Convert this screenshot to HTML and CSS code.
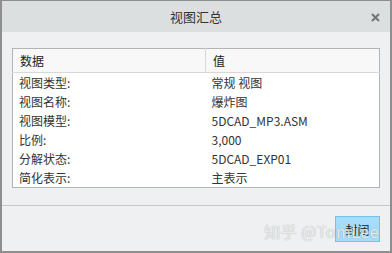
FILE: index.html
```html
<!DOCTYPE html>
<html lang="zh-CN">

<head>
    <meta charset="UTF-8">
    <title>视图汇总</title>
    <link rel="stylesheet" href="styles.css">
</head>

<body>
    <div class="dialogo">
        <!-- Título -->
        <div class="titulo">
            <span>视图汇总</span>
            <svg class="fechar" width="9" height="9" viewBox="0 0 9 9">
                <path d="M1 1 L8 8 M8 1 L1 8" stroke="#777" stroke-width="2.2" />
            </svg>
        </div>

        <!-- Tabela -->
        <div class="conteudo">
            <table class="tabela">
                <thead>
                    <tr>
                        <th class="col-dados">数据</th>
                        <th>值</th>
                    </tr>
                </thead>
                <tbody>
                    <tr><td>视图类型:</td><td>常规 视图</td></tr>
                    <tr><td>视图名称:</td><td>爆炸图</td></tr>
                    <tr><td>视图模型:</td><td>5DCAD_MP3.ASM</td></tr>
                    <tr><td>比例:</td><td>3,000</td></tr>
                    <tr><td>分解状态:</td><td>5DCAD_EXP01</td></tr>
                    <tr><td>简化表示:</td><td>主表示</td></tr>
                </tbody>
            </table>
        </div>

        <!-- Rodapé -->
        <div class="rodape">
            <button class="botao">封闭</button>
            <span class="marca">知乎 @TomLee</span>
        </div>
    </div>
</body>

</html>
```

FILE: styles.css
```css
/* Estilo geral */
body {
    margin: 0;
    padding: 0;
    font-family: "Noto Sans CJK SC", "Liberation Sans", sans-serif;
    font-size: 12px;
    color: #333;
}

.dialogo {
    width: 392px;
    height: 253px;
    box-sizing: border-box;
    border: 1px solid #8e8e8e;
    border-left-width: 2px;
    border-right-width: 2px;
    border-bottom-width: 2px;
    background-color: #eef0f2;
    display: flex;
    flex-direction: column;
}

/* Título */
.titulo {
    height: 31px;
    background-color: #dcdfe0;
    display: flex;
    align-items: center;
    justify-content: center;
    position: relative;
    font-size: 13px;
    color: #333;
}

.fechar {
    position: absolute;
    right: 10px;
    top: 12px;
}

/* Tabela */
.conteudo {
    padding: 16px 10px 0 10px;
    border-bottom: 1px solid #c8c8c8;
    height: 157px;
}

.tabela {
    width: 368px;
    border-collapse: collapse;
    border: 1px solid #b4b4b4;
    background-color: #fff;
}

.tabela th {
    height: 23px;
    padding: 0 0 0 7px;
    text-align: left;
    font-weight: normal;
    background-color: #f8f8f8;
    border-bottom: 1px solid #d8d8d8;
    color: #222;
}

.tabela th.col-dados {
    border-right: 1px solid #d8d8d8;
    width: 185px;
}

.tabela td {
    height: 19px;
    padding: 0 0 0 6px;
    line-height: 19px;
    color: #333;
}

/* Rodapé */
.rodape {
    flex: 1;
    display: flex;
    justify-content: flex-end;
    align-items: flex-start;
    padding: 10px 10px 0 0;
    position: relative;
}

.botao {
    width: 45px;
    height: 26px;
    background-color: #a6dcf8;
    border: 1px solid #6fc3ec;
    font-family: "Noto Sans CJK SC", sans-serif;
    font-size: 12px;
    color: #222;
    padding: 0;
}

.marca {
    position: absolute;
    right: 11px;
    top: 13px;
    font-size: 16px;
    color: rgba(255, 255, 255, 0.8);
    text-shadow: 0 0 1px rgba(110, 110, 110, 0.7);
    letter-spacing: 0.5px;
}
```
